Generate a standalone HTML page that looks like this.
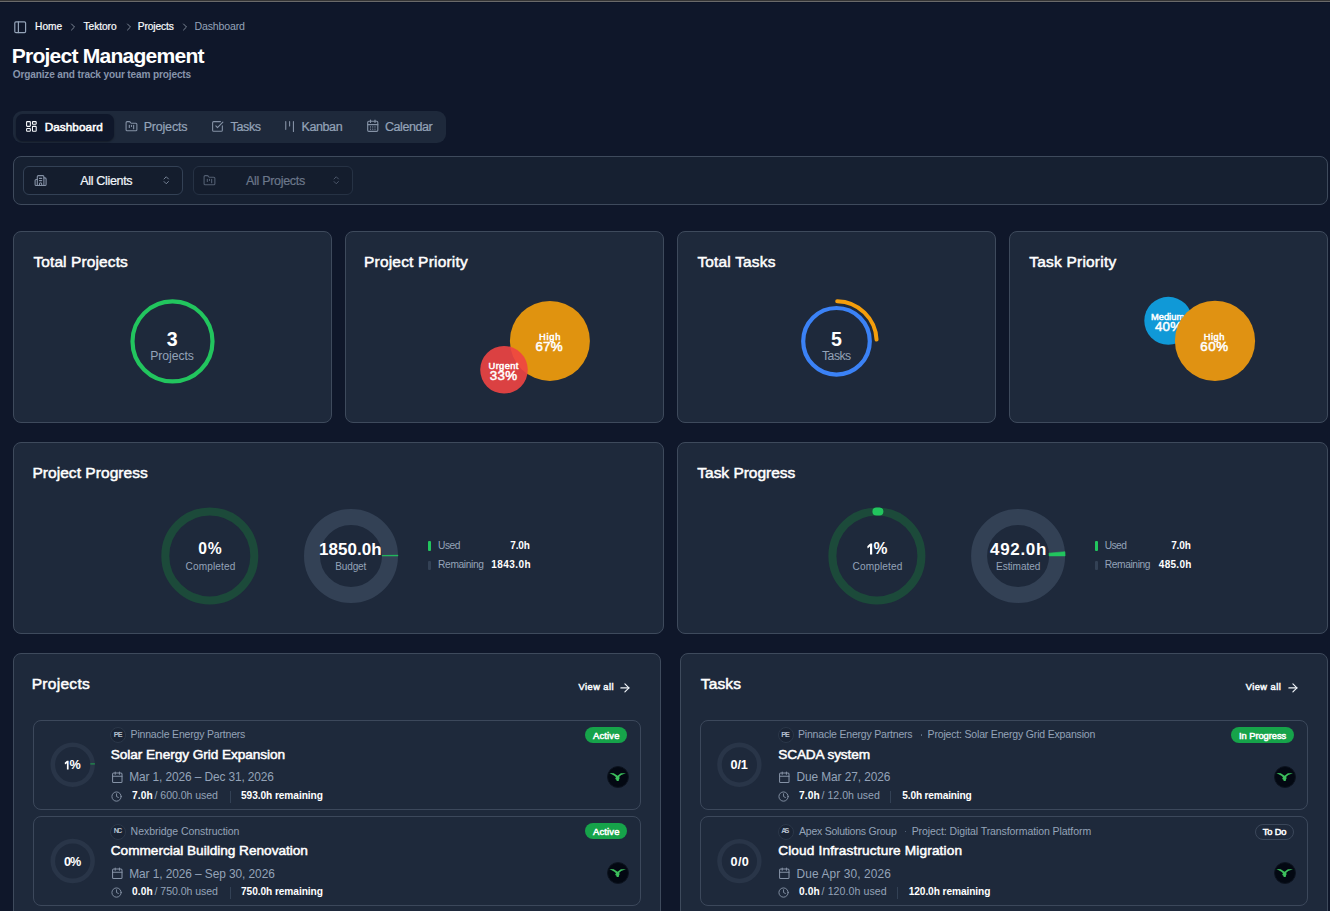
<!DOCTYPE html>
<html><head><meta charset="utf-8">
<style>
*{box-sizing:border-box;margin:0;padding:0}
html,body{width:1330px;height:911px;overflow:hidden;background:#0f172a;font-family:"Liberation Sans",sans-serif;color:#f1f5f9}
.a{position:absolute}
.card{position:absolute;background:#1e293b;border:1px solid #3e4a5c;border-radius:8px}
.item{position:absolute;border:1px solid #3c485b;border-radius:8px}
.t{position:absolute;white-space:nowrap;line-height:1}
svg{position:absolute;overflow:visible}
</style></head><body>
<div class="a" style="left:0;top:0;width:1330px;height:1px;background:#353535"></div>
<div class="a" style="left:0;top:1px;width:1330px;height:1px;background:#6a6a6a"></div>
<div class="a" style="left:0;top:2px;width:1330px;height:1px;background:#0b1326"></div>

<svg style="left:12.86px;top:20.20px" width="14.4" height="14.4" viewBox="0 0 24 24" fill="none" stroke="#94a3b8" stroke-width="2" stroke-linecap="round" stroke-linejoin="round"><rect x="3" y="3" width="18" height="18" rx="2"/><path d="M9 3v18"/></svg>
<div class="t" id="bc1" style="left:35.10px;top:22.00px;font-size:10.17px;font-weight:normal;-webkit-text-stroke:0.22px #f8fafc;color:#f8fafc;letter-spacing:0.000px;">Home</div>
<svg style="left:67.40px;top:21.00px" width="12" height="12" viewBox="0 0 24 24" fill="none" stroke="#7d8796" stroke-width="2" stroke-linecap="round" stroke-linejoin="round"><path d="m9 18 6-6-6-6"/></svg>
<div class="t" id="bc2" style="left:83.50px;top:22.00px;font-size:10.17px;font-weight:normal;-webkit-text-stroke:0.22px #f8fafc;color:#f8fafc;letter-spacing:-0.030px;">Tektoro</div>
<svg style="left:122.80px;top:21.00px" width="12" height="12" viewBox="0 0 24 24" fill="none" stroke="#7d8796" stroke-width="2" stroke-linecap="round" stroke-linejoin="round"><path d="m9 18 6-6-6-6"/></svg>
<div class="t" id="bc3" style="left:137.80px;top:22.00px;font-size:10.17px;font-weight:normal;-webkit-text-stroke:0.22px #f8fafc;color:#f8fafc;letter-spacing:-0.079px;">Projects</div>
<svg style="left:178.80px;top:21.00px" width="12" height="12" viewBox="0 0 24 24" fill="none" stroke="#7d8796" stroke-width="2" stroke-linecap="round" stroke-linejoin="round"><path d="m9 18 6-6-6-6"/></svg>
<div class="t" id="bc4" style="left:194.50px;top:21.00px;font-size:10.58px;font-weight:normal;color:#94a3b8;letter-spacing:-0.161px;">Dashboard</div>
<div class="t" id="title" style="left:11.70px;top:45.00px;font-size:21.08px;font-weight:bold;color:#ffffff;letter-spacing:-0.782px;">Project Management</div>
<div class="t" id="sub" style="left:12.70px;top:70.00px;font-size:10.11px;font-weight:bold;color:#8794ab;letter-spacing:-0.153px;">Organize and track your team projects</div>
<div class="a" style="left:13px;top:111px;width:433px;height:32px;background:#1e293b;border-radius:9px"></div>
<div class="a" style="left:16px;top:114px;width:98px;height:27px;background:#0f172a;border-radius:7px;box-shadow:0 1px 2px rgba(0,0,0,.35)"></div>
<svg style="left:24.73px;top:119.83px" width="12.8" height="12.8" viewBox="0 0 24 24" fill="none" stroke="#f8fafc" stroke-width="2" stroke-linecap="round" stroke-linejoin="round"><rect x="3" y="3" width="7" height="9" rx="1"/><rect x="14" y="3" width="7" height="5" rx="1"/><rect x="14" y="12" width="7" height="9" rx="1"/><rect x="3" y="16" width="7" height="5" rx="1"/></svg>
<div class="t" id="tab1" style="left:44.70px;top:121.00px;font-size:11.75px;font-weight:normal;-webkit-text-stroke:0.5px #ffffff;color:#ffffff;letter-spacing:0.064px;">Dashboard</div>
<svg style="left:124.86px;top:119.92px" width="12.96" height="12.96" viewBox="0 0 24 24" fill="none" stroke="#8592a6" stroke-width="2" stroke-linecap="round" stroke-linejoin="round"><path d="M4 20h16a2 2 0 0 0 2-2V8a2 2 0 0 0-2-2h-7.93a2 2 0 0 1-1.66-.9l-.82-1.2A2 2 0 0 0 7.93 3H4a2 2 0 0 0-2 2v13c0 1.1.9 2 2 2Z"/><path d="M8 10v4"/><path d="M12 10v2"/><path d="M16 10v6"/></svg>
<div class="t" id="tab2" style="left:143.70px;top:121.00px;font-size:12.50px;font-weight:normal;-webkit-text-stroke:0.22px #94a3b8;color:#94a3b8;letter-spacing:-0.198px;">Projects</div>
<svg style="left:210.92px;top:119.82px" width="12.96" height="12.96" viewBox="0 0 24 24" fill="none" stroke="#8592a6" stroke-width="2" stroke-linecap="round" stroke-linejoin="round"><path d="M21 10.5V19a2 2 0 0 1-2 2H5a2 2 0 0 1-2-2V5a2 2 0 0 1 2-2h12.5"/><path d="m9 11 3 3L22 4"/></svg>
<div class="t" id="tab3" style="left:230.50px;top:121.00px;font-size:12.50px;font-weight:normal;-webkit-text-stroke:0.22px #94a3b8;color:#94a3b8;letter-spacing:-0.350px;">Tasks</div>
<svg style="left:282.75px;top:119.80px" width="13.2" height="13.2" viewBox="0 0 24 24" fill="none" stroke="#8592a6" stroke-width="2" stroke-linecap="round" stroke-linejoin="round"><path d="M5 3v14"/><path d="M12 3v8"/><path d="M19 3v18"/></svg>
<div class="t" id="tab4" style="left:301.50px;top:121.00px;font-size:12.50px;font-weight:normal;-webkit-text-stroke:0.22px #94a3b8;color:#94a3b8;letter-spacing:-0.400px;">Kanban</div>
<svg style="left:365.78px;top:119.44px" width="13.5" height="13.5" viewBox="0 0 24 24" fill="none" stroke="#8592a6" stroke-width="2" stroke-linecap="round" stroke-linejoin="round"><path d="M8 2v4"/><path d="M16 2v4"/><rect width="18" height="18" x="3" y="4" rx="2"/><path d="M3 10h18"/><path d="M8 14h.01"/><path d="M12 14h.01"/><path d="M16 14h.01"/><path d="M8 18h.01"/><path d="M12 18h.01"/><path d="M16 18h.01"/></svg>
<div class="t" id="tab5" style="left:385.00px;top:121.00px;font-size:12.50px;font-weight:normal;-webkit-text-stroke:0.22px #94a3b8;color:#94a3b8;letter-spacing:-0.429px;">Calendar</div>
<div class="a" style="left:13px;top:156px;width:1315px;height:49px;background:#162031;border:1px solid #3e4a5c;border-radius:8px"></div>
<div class="a" style="left:23px;top:166px;width:160px;height:29px;background:#141d2d;border:1px solid #334155;border-radius:6px"></div>
<svg style="left:33.65px;top:173.90px" width="13.2" height="13.2" viewBox="0 0 24 24" fill="none" stroke="#8592a6" stroke-width="2" stroke-linecap="round" stroke-linejoin="round"><path d="M10 12h4"/><path d="M10 8h4"/><path d="M14 21v-3a2 2 0 0 0-4 0v3"/><path d="M6 10H4a2 2 0 0 0-2 2v7a2 2 0 0 0 2 2h16a2 2 0 0 0 2-2V9a2 2 0 0 0-2-2h-2"/><path d="M6 21V5a2 2 0 0 1 2-2h8a2 2 0 0 1 2 2v16"/></svg>
<div class="t" id="sel1" style="left:80.30px;top:175.00px;font-size:12.52px;font-weight:normal;-webkit-text-stroke:0.22px #f1f5f9;color:#f1f5f9;letter-spacing:-0.340px;">All Clients</div>
<svg style="left:161.16px;top:174.98px" width="10.5" height="10.5" viewBox="0 0 24 24" fill="none" stroke="#8592a6" stroke-width="2" stroke-linecap="round" stroke-linejoin="round"><path d="m7 15 5 5 5-5"/><path d="m7 9 5-5 5 5"/></svg>
<div class="a" style="left:193px;top:166px;width:160px;height:29px;background:#141d2d;border:1px solid #263244;border-radius:6px"></div>
<svg style="left:202.50px;top:173.90px" width="12.96" height="12.96" viewBox="0 0 24 24" fill="none" stroke="#535f72" stroke-width="2" stroke-linecap="round" stroke-linejoin="round"><path d="M4 20h16a2 2 0 0 0 2-2V8a2 2 0 0 0-2-2h-7.93a2 2 0 0 1-1.66-.9l-.82-1.2A2 2 0 0 0 7.93 3H4a2 2 0 0 0-2 2v13c0 1.1.9 2 2 2Z"/><path d="M8 10v4"/><path d="M12 10v2"/><path d="M16 10v6"/></svg>
<div class="t" id="sel2" style="left:246.00px;top:175.00px;font-size:12.52px;font-weight:normal;-webkit-text-stroke:0.22px #6b778a;color:#6b778a;letter-spacing:-0.305px;">All Projects</div>
<svg style="left:330.66px;top:174.98px" width="10.5" height="10.5" viewBox="0 0 24 24" fill="none" stroke="#535f72" stroke-width="2" stroke-linecap="round" stroke-linejoin="round"><path d="m7 15 5 5 5-5"/><path d="m7 9 5-5 5 5"/></svg>
<div class="card" style="left:13px;top:231px;width:319px;height:192px"></div>
<div class="card" style="left:345px;top:231px;width:319px;height:192px"></div>
<div class="card" style="left:677px;top:231px;width:319px;height:192px"></div>
<div class="card" style="left:1009px;top:231px;width:319px;height:192px"></div>
<div class="t" id="h1" style="left:33.40px;top:254.00px;font-size:15.47px;font-weight:normal;-webkit-text-stroke:0.5px #ffffff;color:#ffffff;letter-spacing:0.121px;">Total Projects</div>
<div class="t" id="h2" style="left:364.00px;top:254.00px;font-size:15.47px;font-weight:normal;-webkit-text-stroke:0.5px #ffffff;color:#ffffff;letter-spacing:0.210px;">Project Priority</div>
<div class="t" id="h3" style="left:697.40px;top:254.00px;font-size:15.47px;font-weight:normal;-webkit-text-stroke:0.5px #ffffff;color:#ffffff;letter-spacing:0.180px;">Total Tasks</div>
<div class="t" id="h4" style="left:1029.30px;top:254.00px;font-size:15.47px;font-weight:normal;-webkit-text-stroke:0.5px #ffffff;color:#ffffff;letter-spacing:0.218px;">Task Priority</div>
<svg style="left:0;top:0" width="1330" height="911">
<circle cx="172.5" cy="341.4" r="40" fill="none" stroke="#22c55e" stroke-width="4.2"/>
<circle cx="549.9" cy="340.9" r="40" fill="#f59e0b" fill-opacity="0.9"/>
<circle cx="504" cy="369.8" r="23.8" fill="#ef4444" fill-opacity="0.9"/>
<circle cx="836.5" cy="341.3" r="33.3" fill="none" stroke="#3b82f6" stroke-width="4.2"/>
<path d="M837.2 301.2 A40.1 40.1 0 0 1 876.56 339.55" fill="none" stroke="#f59e0b" stroke-width="4" stroke-linecap="round"/>
<circle cx="1168.3" cy="320.8" r="24" fill="#0ea5e9" fill-opacity="0.9"/>
</svg>
<div class="t" id="tp_n" style="left:166.70px;top:330.00px;font-size:19.62px;font-weight:bold;color:#ffffff;letter-spacing:0.000px;">3</div>
<div class="t" id="tp_l" style="left:150.30px;top:350.00px;font-size:12.21px;font-weight:normal;color:#94a3b8;letter-spacing:-0.077px;">Projects</div>
<div class="t" id="pp_h" style="left:539.00px;top:333.00px;font-size:9.30px;font-weight:normal;-webkit-text-stroke:0.5px #ffffff;color:#ffffff;letter-spacing:0.727px;">High</div>
<div class="t" id="pp_hp" style="left:535.60px;top:340.00px;font-size:13.37px;font-weight:normal;-webkit-text-stroke:0.5px #ffffff;color:#ffffff;letter-spacing:0.100px;">67%</div>
<div class="t" id="pp_u" style="left:488.60px;top:362.00px;font-size:9.30px;font-weight:normal;-webkit-text-stroke:0.5px #ffffff;color:#ffffff;letter-spacing:0.360px;">Urgent</div>
<div class="t" id="pp_up" style="left:489.80px;top:369.00px;font-size:13.37px;font-weight:normal;-webkit-text-stroke:0.5px #ffffff;color:#ffffff;letter-spacing:0.300px;">33%</div>
<div class="t" id="tt_n" style="left:831.00px;top:330.00px;font-size:19.62px;font-weight:bold;color:#ffffff;letter-spacing:0.000px;">5</div>
<div class="t" id="tt_l" style="left:822.00px;top:350.00px;font-size:12.21px;font-weight:normal;color:#94a3b8;letter-spacing:-0.500px;">Tasks</div>
<div class="t" id="tk_m" style="left:1150.90px;top:313.00px;font-size:9.30px;font-weight:normal;-webkit-text-stroke:0.5px #ffffff;color:#ffffff;letter-spacing:0.040px;">Medium</div>
<div class="t" id="tk_mp" style="left:1155.10px;top:320.00px;font-size:13.37px;font-weight:normal;-webkit-text-stroke:0.5px #ffffff;color:#ffffff;letter-spacing:0.100px;">40%</div>
<svg style="left:0;top:0" width="1330" height="911"><circle cx="1215" cy="340.9" r="40.1" fill="#e09212"/></svg>
<div class="t" id="tk_h" style="left:1203.80px;top:333.00px;font-size:9.30px;font-weight:normal;-webkit-text-stroke:0.5px #ffffff;color:#ffffff;letter-spacing:0.471px;">High</div>
<div class="t" id="tk_hp" style="left:1200.30px;top:340.00px;font-size:13.37px;font-weight:normal;-webkit-text-stroke:0.5px #ffffff;color:#ffffff;letter-spacing:0.600px;">60%</div>
<div class="card" style="left:13px;top:442px;width:651px;height:192px"></div>
<div class="card" style="left:677px;top:442px;width:651px;height:192px"></div>
<div class="t" id="h5" style="left:32.40px;top:465.00px;font-size:15.54px;font-weight:normal;-webkit-text-stroke:0.5px #ffffff;color:#ffffff;letter-spacing:0.038px;">Project Progress</div>
<div class="t" id="h6" style="left:697.30px;top:465.00px;font-size:15.54px;font-weight:normal;-webkit-text-stroke:0.5px #ffffff;color:#ffffff;letter-spacing:-0.032px;">Task Progress</div>
<svg style="left:0;top:0" width="1330" height="911"><circle cx="209.8" cy="555.9" r="44.5" fill="none" stroke="#1c4a3a" stroke-width="8"/>
<circle cx="351.0" cy="555.9" r="39" fill="none" stroke="#334155" stroke-width="16"/>
<path d="M382.0 555.9 L398.0 555.9 A47 47 0 0 0 398.00 555.24 L382.00 555.47 A31 31 0 0 1 382.0 555.9 Z" fill="#22c55e" stroke="#22c55e" stroke-width="0.6"/>
</svg>
<div class="t" id="pp_pct" style="left:198.20px;top:541.00px;font-size:15.68px;font-weight:bold;color:#ffffff;letter-spacing:0.800px;">0%</div>
<div class="t" id="pp_cmp" style="left:185.50px;top:562.00px;font-size:10.08px;font-weight:normal;color:#94a3b8;letter-spacing:0.126px;">Completed</div>
<div class="t" id="pp_big" style="left:318.90px;top:541.00px;font-size:17.01px;font-weight:bold;color:#ffffff;letter-spacing:0.069px;">1850.0h</div>
<div class="t" id="pp_bud" style="left:335.20px;top:562.00px;font-size:10.08px;font-weight:normal;color:#94a3b8;letter-spacing:-0.160px;">Budget</div>
<div class="a" style="left:428.2px;top:541.2px;width:2.7px;height:9.6px;background:#22c55e;border-radius:1px"></div>
<div class="a" style="left:428.2px;top:561px;width:2.7px;height:9px;background:#334155;border-radius:1px"></div>
<div class="t" id="pp_used" style="left:438.10px;top:541.00px;font-size:10.23px;font-weight:normal;color:#94a3b8;letter-spacing:-0.530px;">Used</div>
<div class="t" id="pp_usedv" style="left:510.30px;top:541.00px;font-size:10.03px;font-weight:bold;color:#ffffff;letter-spacing:-0.138px;">7.0h</div>
<div class="t" id="pp_rem" style="left:438.10px;top:560.00px;font-size:10.23px;font-weight:normal;color:#94a3b8;letter-spacing:-0.375px;">Remaining</div>
<div class="t" id="pp_remv" style="left:491.30px;top:560.00px;font-size:10.03px;font-weight:bold;color:#ffffff;letter-spacing:0.437px;">1843.0h</div>
<svg style="left:0;top:0" width="1330" height="911"><circle cx="876.9000000000001" cy="555.9" r="44.5" fill="none" stroke="#1c4a3a" stroke-width="8"/>
<path d="M876.4000000000001 511.4 A44.5 44.5 0 0 1 879.4000000000001 511.5" fill="none" stroke="#22c55e" stroke-width="8" stroke-linecap="round"/>
<circle cx="1018.1" cy="555.9" r="39" fill="none" stroke="#334155" stroke-width="16"/>
<path d="M1049.1 555.9 L1065.1 555.9 A47 47 0 0 0 1064.91 551.72 L1048.98 553.14 A31 31 0 0 1 1049.1 555.9 Z" fill="#22c55e" stroke="#22c55e" stroke-width="0.6"/>
</svg>
<svg style="left:0;top:0" width="1330" height="911"><path d="M867.3 546.2 L870.2 543.5 L872.2 543.5 L872.2 554.5 L870.0 554.5 L870.0 546.6 L867.6 548.4 Z" fill="#ffffff"/></svg>
<div class="t" id="tp_pct" style="left:873.60px;top:541.00px;font-size:15.68px;font-weight:bold;color:#ffffff;letter-spacing:0.000px;">%</div>
<div class="t" id="tp_cmp" style="left:852.60px;top:562.00px;font-size:10.08px;font-weight:normal;color:#94a3b8;letter-spacing:0.126px;">Completed</div>
<div class="t" id="tp_big" style="left:990.00px;top:541.00px;font-size:17.01px;font-weight:bold;color:#ffffff;letter-spacing:0.680px;">492.0h</div>
<div class="t" id="tp_est" style="left:996.00px;top:562.00px;font-size:10.08px;font-weight:normal;color:#94a3b8;letter-spacing:-0.064px;">Estimated</div>
<div class="a" style="left:1095.3px;top:541.2px;width:2.7px;height:9.6px;background:#22c55e;border-radius:1px"></div>
<div class="a" style="left:1095.3px;top:561px;width:2.7px;height:9px;background:#334155;border-radius:1px"></div>
<div class="t" id="tp_used" style="left:1104.70px;top:541.00px;font-size:10.23px;font-weight:normal;color:#94a3b8;letter-spacing:-0.530px;">Used</div>
<div class="t" id="tp_usedv" style="left:1171.20px;top:541.00px;font-size:10.03px;font-weight:bold;color:#ffffff;letter-spacing:-0.138px;">7.0h</div>
<div class="t" id="tp_rem" style="left:1104.70px;top:560.00px;font-size:10.23px;font-weight:normal;color:#94a3b8;letter-spacing:-0.375px;">Remaining</div>
<div class="t" id="tp_remv" style="left:1158.80px;top:560.00px;font-size:10.03px;font-weight:bold;color:#ffffff;letter-spacing:0.280px;">485.0h</div>
<div class="card" style="left:13px;top:653px;width:648px;height:300px"></div>
<div class="card" style="left:680px;top:653px;width:648px;height:300px"></div>
<div class="t" id="h7" style="left:31.70px;top:676.00px;font-size:15.54px;font-weight:normal;-webkit-text-stroke:0.5px #ffffff;color:#ffffff;letter-spacing:0.286px;">Projects</div>
<div class="t" id="h8" style="left:700.80px;top:676.00px;font-size:15.54px;font-weight:normal;-webkit-text-stroke:0.5px #ffffff;color:#ffffff;letter-spacing:0.100px;">Tasks</div>
<div class="t" id="va1" style="left:578.50px;top:683.00px;font-size:9.25px;font-weight:normal;-webkit-text-stroke:0.5px #f8fafc;color:#f8fafc;letter-spacing:0.484px;">View all</div>
<div class="t" id="va2" style="left:1245.70px;top:683.00px;font-size:9.25px;font-weight:normal;-webkit-text-stroke:0.5px #f8fafc;color:#f8fafc;letter-spacing:0.484px;">View all</div>
<svg style="left:617.80px;top:680.70px" width="13.8" height="13.8" viewBox="0 0 24 24" fill="none" stroke="#f1f5f9" stroke-width="2" stroke-linecap="round" stroke-linejoin="round"><path d="M5 12h14"/><path d="m12 5 7 7-7 7"/></svg>
<svg style="left:1285.90px;top:680.70px" width="13.8" height="13.8" viewBox="0 0 24 24" fill="none" stroke="#f1f5f9" stroke-width="2" stroke-linecap="round" stroke-linejoin="round"><path d="M5 12h14"/><path d="m12 5 7 7-7 7"/></svg>
<div class="item" style="left:33px;top:720px;width:608px;height:90px"></div>
<svg style="left:0;top:0" width="1330" height="911"><circle cx="72.7" cy="764.7" r="19.9" fill="none" stroke="#293548" stroke-width="4.6"/>
<path d="M90.3 763.9 H94.9" stroke="#1f9a4c" stroke-width="1.1"/>
</svg>
<svg style="left:0;top:0" width="1330" height="911"><path d="M64.7 762.8 L67.0 760.7 L68.6 760.7 L68.6 769.4 L66.9 769.4 L66.9 763.2 L65.0 764.6 Z" fill="#ffffff"/></svg>
<div class="t" id="ip_pct0" style="left:69.60px;top:759.00px;font-size:12.65px;font-weight:bold;color:#ffffff;letter-spacing:0.000px;">%</div>
<div class="a" style="left:110px;top:727.4px;width:16px;height:16px;border-radius:50%;background:#1a2435;border:1px solid #2b3749"></div>
<div class="t" id="ip_code0" style="left:113.80px;top:731.00px;font-size:7.27px;font-weight:bold;color:#b4bfcd;letter-spacing:-1.000px;">PE</div>
<div class="t" id="ip_cl0" style="left:130.60px;top:729.00px;font-size:10.53px;font-weight:normal;color:#94a3b8;letter-spacing:-0.195px;">Pinnacle Energy Partners</div>
<div class="t" id="ip_ti0" style="left:110.80px;top:748.00px;font-size:13.67px;font-weight:normal;-webkit-text-stroke:0.5px #ffffff;color:#ffffff;letter-spacing:-0.068px;">Solar Energy Grid Expansion</div>
<svg style="left:110.95px;top:770.70px" width="12.6" height="12.6" viewBox="0 0 24 24" fill="none" stroke="#8592a6" stroke-width="2" stroke-linecap="round" stroke-linejoin="round"><path d="M8 2v4"/><path d="M16 2v4"/><rect width="18" height="18" x="3" y="4" rx="2"/><path d="M3 10h18"/></svg>
<div class="t" id="ip_dt0" style="left:129.20px;top:772.00px;font-size:11.92px;font-weight:normal;color:#94a3b8;letter-spacing:-0.112px;">Mar 1, 2026 – Dec 31, 2026</div>
<svg style="left:110.60px;top:790.55px" width="11.1" height="11.1" viewBox="0 0 24 24" fill="none" stroke="#8592a6" stroke-width="2" stroke-linecap="round" stroke-linejoin="round"><circle cx="12" cy="12" r="10"/><path d="M12 6v6l4 2"/></svg>
<div class="t" id="ip_ub0" style="left:132.00px;top:791.00px;font-size:10.17px;font-weight:bold;color:#ffffff;letter-spacing:0.138px;">7.0h</div>
<div class="t" id="ip_ur0" style="left:154.60px;top:790.00px;font-size:10.58px;font-weight:normal;color:#94a3b8;letter-spacing:-0.062px;">/ 600.0h used</div>
<div class="a" style="left:229.5px;top:790.5px;width:1px;height:12px;background:#334155"></div>
<div class="t" id="ip_rm0" style="left:241.00px;top:791.00px;font-size:10.17px;font-weight:bold;color:#ffffff;letter-spacing:-0.076px;">593.0h remaining</div>
<div class="a" style="left:584.8px;top:726.9px;width:42.2px;height:16.3px;border-radius:9px;background:#16a34a"></div>
<div class="t" id="ip_bd0" style="left:593.10px;top:731.00px;font-size:9.45px;font-weight:normal;-webkit-text-stroke:0.5px #ffffff;color:#ffffff;letter-spacing:0.120px;">Active</div>
<div class="a" style="left:606.9px;top:765.9px;width:22px;height:22px;border-radius:50%;background:#030812;border:1px solid #0d1420"></div>
<svg style="left:617.9px;top:776.9px" width="1" height="1"><path d="M-8.6 -3.9 L-4.3 -3.8 L-0.4 -1.2 L2.9 -3.8 L7.9 -3.8 L3.2 -1.9 L1.2 -0.3 L1.6 1.3 L1.0 2.4 L0.7 4.0 L-1.3 4.0 L-1.6 2.7 L-2.7 2.1 L-2.6 1.2 L-2.0 0.2 L-3.6 -1.3 Z" fill="#3cc05c"/></svg>
<div class="item" style="left:33px;top:816px;width:608px;height:90px"></div>
<svg style="left:0;top:0" width="1330" height="911"><circle cx="72.7" cy="861.0" r="19.9" fill="none" stroke="#293548" stroke-width="4.6"/>
</svg>
<div class="t" id="ip_pct96" style="left:64.00px;top:856.00px;font-size:12.65px;font-weight:bold;color:#ffffff;letter-spacing:-1.000px;">0%</div>
<div class="a" style="left:110px;top:823.7px;width:16px;height:16px;border-radius:50%;background:#1a2435;border:1px solid #2b3749"></div>
<div class="t" id="ip_code96" style="left:113.80px;top:827.00px;font-size:7.27px;font-weight:bold;color:#b4bfcd;letter-spacing:-2.000px;">NC</div>
<div class="t" id="ip_cl96" style="left:130.60px;top:826.00px;font-size:10.53px;font-weight:normal;color:#94a3b8;letter-spacing:-0.048px;">Nexbridge Construction</div>
<div class="t" id="ip_ti96" style="left:110.80px;top:844.00px;font-size:13.67px;font-weight:normal;-webkit-text-stroke:0.5px #ffffff;color:#ffffff;letter-spacing:-0.035px;">Commercial Building Renovation</div>
<svg style="left:110.95px;top:867.00px" width="12.6" height="12.6" viewBox="0 0 24 24" fill="none" stroke="#8592a6" stroke-width="2" stroke-linecap="round" stroke-linejoin="round"><path d="M8 2v4"/><path d="M16 2v4"/><rect width="18" height="18" x="3" y="4" rx="2"/><path d="M3 10h18"/></svg>
<div class="t" id="ip_dt96" style="left:129.20px;top:869.00px;font-size:11.92px;font-weight:normal;color:#94a3b8;letter-spacing:-0.080px;">Mar 1, 2026 – Sep 30, 2026</div>
<svg style="left:110.60px;top:886.85px" width="11.1" height="11.1" viewBox="0 0 24 24" fill="none" stroke="#8592a6" stroke-width="2" stroke-linecap="round" stroke-linejoin="round"><circle cx="12" cy="12" r="10"/><path d="M12 6v6l4 2"/></svg>
<div class="t" id="ip_ub96" style="left:132.00px;top:887.00px;font-size:10.17px;font-weight:bold;color:#ffffff;letter-spacing:0.138px;">0.0h</div>
<div class="t" id="ip_ur96" style="left:154.60px;top:886.00px;font-size:10.58px;font-weight:normal;color:#94a3b8;letter-spacing:-0.062px;">/ 750.0h used</div>
<div class="a" style="left:229.5px;top:886.8px;width:1px;height:12px;background:#334155"></div>
<div class="t" id="ip_rm96" style="left:241.00px;top:887.00px;font-size:10.17px;font-weight:bold;color:#ffffff;letter-spacing:-0.076px;">750.0h remaining</div>
<div class="a" style="left:584.8px;top:823.2px;width:42.2px;height:16.3px;border-radius:9px;background:#16a34a"></div>
<div class="t" id="ip_bd96" style="left:593.10px;top:827.00px;font-size:9.45px;font-weight:normal;-webkit-text-stroke:0.5px #ffffff;color:#ffffff;letter-spacing:0.120px;">Active</div>
<div class="a" style="left:606.9px;top:862.2px;width:22px;height:22px;border-radius:50%;background:#030812;border:1px solid #0d1420"></div>
<svg style="left:617.9px;top:873.2px" width="1" height="1"><path d="M-8.6 -3.9 L-4.3 -3.8 L-0.4 -1.2 L2.9 -3.8 L7.9 -3.8 L3.2 -1.9 L1.2 -0.3 L1.6 1.3 L1.0 2.4 L0.7 4.0 L-1.3 4.0 L-1.6 2.7 L-2.7 2.1 L-2.6 1.2 L-2.0 0.2 L-3.6 -1.3 Z" fill="#3cc05c"/></svg>
<div class="item" style="left:700px;top:720px;width:608px;height:90px"></div>
<svg style="left:0;top:0" width="1330" height="911"><circle cx="739.4" cy="764.8" r="19.9" fill="none" stroke="#293548" stroke-width="4.6"/></svg>
<div class="t" id="it_r0" style="left:730.50px;top:759.00px;font-size:12.65px;font-weight:bold;color:#ffffff;letter-spacing:-0.100px;">0/1</div>
<div class="a" style="left:777.5px;top:727.4px;width:16px;height:16px;border-radius:50%;background:#1a2435;border:1px solid #2b3749"></div>
<div class="t" id="it_code0" style="left:781.20px;top:731.00px;font-size:7.27px;font-weight:bold;color:#b4bfcd;letter-spacing:-1.000px;">PE</div>
<div class="t" id="it_cl0" style="left:798.00px;top:729.00px;font-size:10.53px;font-weight:normal;color:#94a3b8;letter-spacing:-0.202px;">Pinnacle Energy Partners</div>
<div class="a" style="left:920.6px;top:734.2px;width:1.6px;height:1.6px;border-radius:50%;background:#64748b"></div>
<div class="t" id="it_pj0" style="left:927.60px;top:729.00px;font-size:10.53px;font-weight:normal;color:#94a3b8;letter-spacing:-0.184px;">Project: Solar Energy Grid Expansion</div>
<div class="t" id="it_ti0" style="left:778.20px;top:748.00px;font-size:13.67px;font-weight:normal;-webkit-text-stroke:0.5px #ffffff;color:#ffffff;letter-spacing:-0.133px;">SCADA system</div>
<svg style="left:777.65px;top:770.70px" width="12.6" height="12.6" viewBox="0 0 24 24" fill="none" stroke="#8592a6" stroke-width="2" stroke-linecap="round" stroke-linejoin="round"><path d="M8 2v4"/><path d="M16 2v4"/><rect width="18" height="18" x="3" y="4" rx="2"/><path d="M3 10h18"/></svg>
<div class="t" id="it_dt0" style="left:796.50px;top:772.00px;font-size:11.92px;font-weight:normal;color:#94a3b8;letter-spacing:-0.096px;">Due Mar 27, 2026</div>
<svg style="left:777.90px;top:790.55px" width="11.1" height="11.1" viewBox="0 0 24 24" fill="none" stroke="#8592a6" stroke-width="2" stroke-linecap="round" stroke-linejoin="round"><circle cx="12" cy="12" r="10"/><path d="M12 6v6l4 2"/></svg>
<div class="t" id="it_ub0" style="left:799.00px;top:791.00px;font-size:10.17px;font-weight:bold;color:#ffffff;letter-spacing:0.138px;">7.0h</div>
<div class="t" id="it_ur0" style="left:821.60px;top:790.00px;font-size:10.58px;font-weight:normal;color:#94a3b8;letter-spacing:0.000px;">/ 12.0h used</div>
<div class="a" style="left:890.3px;top:790.5px;width:1px;height:12px;background:#334155"></div>
<div class="t" id="it_rm0" style="left:902.30px;top:791.00px;font-size:10.17px;font-weight:bold;color:#ffffff;letter-spacing:-0.175px;">5.0h remaining</div>
<div class="a" style="left:1231px;top:726.8px;width:62.9px;height:16px;border-radius:9px;background:#16a34a"></div>
<div class="t" id="it_bd0" style="left:1239.00px;top:732.00px;font-size:9.30px;font-weight:normal;-webkit-text-stroke:0.5px #ffffff;color:#ffffff;letter-spacing:-0.040px;">In Progress</div>
<div class="a" style="left:1273.6px;top:765.9px;width:22px;height:22px;border-radius:50%;background:#030812;border:1px solid #0d1420"></div>
<svg style="left:1284.6px;top:776.9px" width="1" height="1"><path d="M-8.6 -3.9 L-4.3 -3.8 L-0.4 -1.2 L2.9 -3.8 L7.9 -3.8 L3.2 -1.9 L1.2 -0.3 L1.6 1.3 L1.0 2.4 L0.7 4.0 L-1.3 4.0 L-1.6 2.7 L-2.7 2.1 L-2.6 1.2 L-2.0 0.2 L-3.6 -1.3 Z" fill="#3cc05c"/></svg>
<div class="item" style="left:700px;top:816px;width:608px;height:90px"></div>
<svg style="left:0;top:0" width="1330" height="911"><circle cx="739.4" cy="861.1" r="19.9" fill="none" stroke="#293548" stroke-width="4.6"/></svg>
<div class="t" id="it_r96" style="left:730.50px;top:856.00px;font-size:12.65px;font-weight:bold;color:#ffffff;letter-spacing:0.400px;">0/0</div>
<div class="a" style="left:777.5px;top:823.7px;width:16px;height:16px;border-radius:50%;background:#1a2435;border:1px solid #2b3749"></div>
<div class="t" id="it_code96" style="left:781.20px;top:827.00px;font-size:7.27px;font-weight:bold;color:#b4bfcd;letter-spacing:-2.000px;">AS</div>
<div class="t" id="it_cl96" style="left:799.00px;top:826.00px;font-size:10.53px;font-weight:normal;color:#94a3b8;letter-spacing:-0.240px;">Apex Solutions Group</div>
<div class="a" style="left:904.7px;top:830.5px;width:1.6px;height:1.6px;border-radius:50%;background:#64748b"></div>
<div class="t" id="it_pj96" style="left:911.70px;top:826.00px;font-size:10.53px;font-weight:normal;color:#94a3b8;letter-spacing:-0.089px;">Project: Digital Transformation Platform</div>
<div class="t" id="it_ti96" style="left:778.20px;top:844.00px;font-size:13.67px;font-weight:normal;-webkit-text-stroke:0.5px #ffffff;color:#ffffff;letter-spacing:0.137px;">Cloud Infrastructure Migration</div>
<svg style="left:777.65px;top:867.00px" width="12.6" height="12.6" viewBox="0 0 24 24" fill="none" stroke="#8592a6" stroke-width="2" stroke-linecap="round" stroke-linejoin="round"><path d="M8 2v4"/><path d="M16 2v4"/><rect width="18" height="18" x="3" y="4" rx="2"/><path d="M3 10h18"/></svg>
<div class="t" id="it_dt96" style="left:796.50px;top:869.00px;font-size:11.92px;font-weight:normal;color:#94a3b8;letter-spacing:0.111px;">Due Apr 30, 2026</div>
<svg style="left:777.90px;top:886.85px" width="11.1" height="11.1" viewBox="0 0 24 24" fill="none" stroke="#8592a6" stroke-width="2" stroke-linecap="round" stroke-linejoin="round"><circle cx="12" cy="12" r="10"/><path d="M12 6v6l4 2"/></svg>
<div class="t" id="it_ub96" style="left:799.00px;top:887.00px;font-size:10.17px;font-weight:bold;color:#ffffff;letter-spacing:0.138px;">0.0h</div>
<div class="t" id="it_ur96" style="left:821.60px;top:886.00px;font-size:10.58px;font-weight:normal;color:#94a3b8;letter-spacing:0.084px;">/ 120.0h used</div>
<div class="a" style="left:897.3px;top:886.8px;width:1px;height:12px;background:#334155"></div>
<div class="t" id="it_rm96" style="left:908.70px;top:887.00px;font-size:10.17px;font-weight:bold;color:#ffffff;letter-spacing:-0.084px;">120.0h remaining</div>
<div class="a" style="left:1255px;top:824.1px;width:38.9px;height:15.7px;border-radius:9px;border:1px solid #3b475a"></div>
<div class="t" id="it_bd96" style="left:1262.80px;top:828.00px;font-size:9.30px;font-weight:normal;-webkit-text-stroke:0.5px #ffffff;color:#ffffff;letter-spacing:-0.150px;">To Do</div>
<div class="a" style="left:1273.6px;top:862.2px;width:22px;height:22px;border-radius:50%;background:#030812;border:1px solid #0d1420"></div>
<svg style="left:1284.6px;top:873.2px" width="1" height="1"><path d="M-8.6 -3.9 L-4.3 -3.8 L-0.4 -1.2 L2.9 -3.8 L7.9 -3.8 L3.2 -1.9 L1.2 -0.3 L1.6 1.3 L1.0 2.4 L0.7 4.0 L-1.3 4.0 L-1.6 2.7 L-2.7 2.1 L-2.6 1.2 L-2.0 0.2 L-3.6 -1.3 Z" fill="#3cc05c"/></svg>
</body></html>
